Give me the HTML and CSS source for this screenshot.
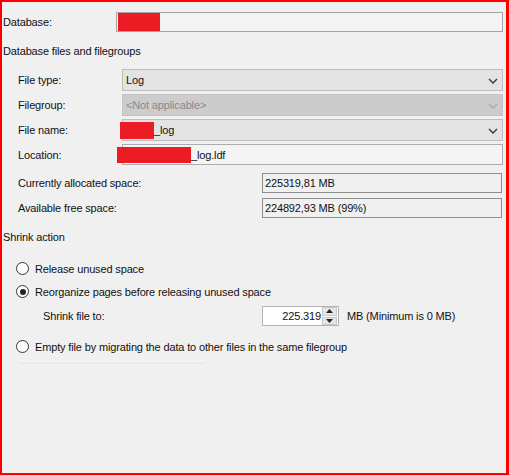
FILE: index.html
```html
<!DOCTYPE html>
<html lang="en">
<head>
    <meta charset="UTF-8">
    <meta name="viewport" content="width=device-width, initial-scale=1.0">
    <title>Shrink File</title>
    <link rel="stylesheet" href="styles.css">
</head>
<body>
    <div id="dialog">
        <div class="row db_row">
            <span class="lbl db_lbl">Database:</span>
            <div class="textbox db_box"><span class="redact" style="width:42px"></span></div>
        </div>

        <div class="heading files_head">Database files and filegroups</div>

        <div class="files">
            <div class="row frow">
                <span class="lbl">File type:</span>
                <div class="combo">
                    <span class="val">Log</span>
                    <svg class="chev" width="10" height="6" viewBox="0 0 10 6"><polyline points="1,1 5,5 9,1" fill="none" stroke="#333" stroke-width="1.3"/></svg>
                </div>
            </div>
            <div class="row frow">
                <span class="lbl">Filegroup:</span>
                <div class="combo disabled">
                    <span class="val">&lt;Not applicable&gt;</span>
                    <svg class="chev" width="10" height="6" viewBox="0 0 10 6"><polyline points="1,1 5,5 9,1" fill="none" stroke="#aaa" stroke-width="1.3"/></svg>
                </div>
            </div>
            <div class="row frow">
                <span class="lbl">File name:</span>
                <div class="combo">
                    <span class="redact name_red" style="width:34px"></span><span class="val">_log</span>
                    <svg class="chev" width="10" height="6" viewBox="0 0 10 6"><polyline points="1,1 5,5 9,1" fill="none" stroke="#333" stroke-width="1.3"/></svg>
                </div>
            </div>
            <div class="row frow">
                <span class="lbl">Location:</span>
                <div class="textbox loc_box">
                    <span class="redact loc_red" style="width:74px"></span><span class="val">_log.ldf</span>
                </div>
            </div>

            <div class="row srow first">
                <span class="lbl space_lbl">Currently allocated space:</span>
                <div class="textbox value_box"><span class="val">225319,81 MB</span></div>
            </div>
            <div class="row srow">
                <span class="lbl space_lbl">Available free space:</span>
                <div class="textbox value_box"><span class="val">224892,93 MB (99%)</span></div>
            </div>
        </div>

        <div class="heading shrink_head">Shrink action</div>

        <div class="options">
            <label class="radio"><span class="dot"></span>Release unused space</label>
            <label class="radio"><span class="dot checked"></span>Reorganize pages before releasing unused space</label>
            <div class="shrink_to">
                <span class="lbl shrink_lbl">Shrink file to:</span>
                <div class="spin">
                    <span class="num">225.319</span>
                    <div class="spin_btns">
                        <div class="sbtn"><svg width="7" height="4" viewBox="0 0 7 4"><polygon points="0,4 3.5,0 7,4" fill="#222"/></svg></div>
                        <div class="sbtn"><svg width="7" height="4" viewBox="0 0 7 4"><polygon points="0,0 3.5,4 7,0" fill="#222"/></svg></div>
                    </div>
                </div>
                <span class="unit">MB (Minimum is 0 MB)</span>
            </div>
            <label class="radio"><span class="dot"></span>Empty file by migrating the data to other files in the same filegroup</label>
            <div class="rule"></div>
        </div>
    </div>
</body>
</html>
```

FILE: styles.css
```css
body{
    margin: 0;
    font-family: "Liberation Sans", Arial, sans-serif;
    font-size: 11px;
    letter-spacing: -0.15px;
    color: #111;
}

#dialog{
    width: 509px;
    height: 475px;
    box-sizing: border-box;
    border: solid #ff0000;
    border-width: 2px 3px 2px 2px;
    background: #f0f0f0;
    padding: 10px 3px 0 1px;
}

.row{
    display: flex;
    align-items: center;
}

.lbl{
    flex: none;
}

.db_lbl{
    width: 113px;
}

.textbox{
    box-sizing: border-box;
    border: 1px solid #a3a3a3;
    background: #f3f3f3;
    display: flex;
    align-items: center;
}

.db_box{
    flex: 1;
    height: 20px;
    padding-left: 1px;
}

.redact{
    display: inline-block;
    height: 18px;
    background: #ec1c24;
    flex: none;
}

.heading{
    height: 16px;
    line-height: 16px;
}

.files_head{
    margin-top: 11px;
}

.files{
    padding-left: 15px;
    margin-top: 10px;
}

.frow{
    height: 25px;
    align-items: flex-start;
}

.frow .lbl{
    width: 104px;
    line-height: 22px;
}

.combo{
    flex: 1;
    height: 22px;
    box-sizing: border-box;
    border: 1px solid #bdbdbd;
    background: #e3e3e3;
    display: flex;
    align-items: center;
    padding-left: 3px;
    position: relative;
}

.combo.disabled{
    background: #cccccc;
    border-color: #c4c4c4;
    color: #8a8a8a;
}

.chev{
    position: absolute;
    right: 4px;
    top: 8px;
}

.name_red{
    margin-left: -6px;
    height: 17px;
}

.loc_box{
    flex: 1;
    height: 21px;
    border-color: #adadad;
    background: #f4f4f4;
}

.loc_red{
    margin-left: -6px;
    height: 16px;
}

.srow{
    height: 25px;
    align-items: flex-start;
}

.srow.first{
    margin-top: 4px;
}

.space_lbl{
    width: 244px;
    line-height: 20px;
}

.value_box{
    width: 240px;
    height: 20px;
    border-color: #8e8e8e;
    background: #f0f0f0;
    padding-left: 2px;
}

.shrink_head{
    margin-top: 6px;
}

.options{
    margin-top: 12px;
    padding-left: 13px;
}

.radio{
    display: flex;
    align-items: center;
    height: 23px;
}

.dot{
    width: 13px;
    height: 13px;
    box-sizing: border-box;
    border: 1px solid #333;
    border-radius: 50%;
    background: #fff;
    margin-right: 6px;
    flex: none;
    display: flex;
    align-items: center;
    justify-content: center;
}

.dot.checked::after{
    content: "";
    width: 6px;
    height: 6px;
    border-radius: 50%;
    background: #222;
}

.shrink_to{
    display: flex;
    align-items: center;
    height: 20px;
    margin-top: 3px;
    margin-bottom: 9px;
    padding-left: 27px;
}

.shrink_lbl{
    width: 219px;
}

.spin{
    width: 77px;
    height: 20px;
    box-sizing: border-box;
    border: 1px solid #b4b4b4;
    background: #fff;
    display: flex;
    align-items: center;
}

.num{
    flex: 1;
    text-align: right;
    padding-right: 1px;
}

.spin_btns{
    width: 15px;
    height: 18px;
    display: flex;
    flex-direction: column;
    gap: 1px;
    margin-right: 1px;
}

.sbtn{
    flex: 1;
    background: #e6e6e6;
    border: 1px solid #c8c8c8;
    display: flex;
    align-items: center;
    justify-content: center;
}

.unit{
    margin-left: 8px;
}

.rule{
    width: 186px;
    height: 2px;
    margin: 3px 0 0 3px;
    background: #eaeaea;
    border-top: 1px solid #f6f6f6;
}
```
